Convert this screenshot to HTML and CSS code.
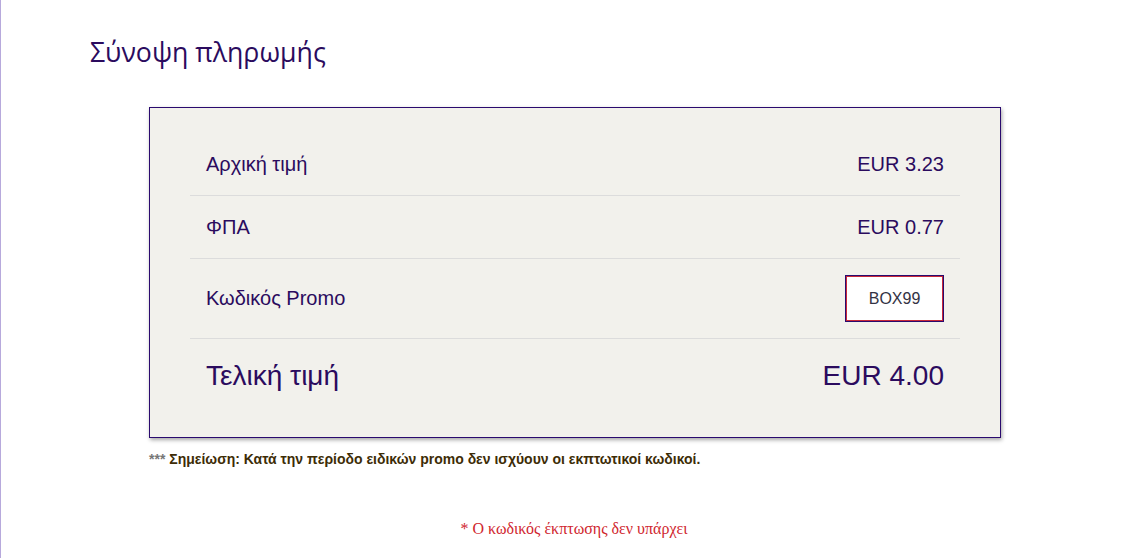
FILE: index.html
```html
<!DOCTYPE html>
<html lang="el">
<head>
    <meta charset="UTF-8">
    <meta name="viewport" content="width=device-width, initial-scale=1.0">
    <title>Σύνοψη πληρωμής</title>
    <link rel="stylesheet" href="styles.css">
</head>
<body>
    <div class="page">
        <!-- Title -->
        <h1 class="page-title">Σύνοψη πληρωμής</h1>

        <!-- Summary box -->
        <div class="summary">
            <div class="summary-row">
                <span class="label">Αρχική τιμή</span>
                <span class="value">EUR 3.23</span>
            </div>
            <div class="summary-row">
                <span class="label">ΦΠΑ</span>
                <span class="value">EUR 0.77</span>
            </div>
            <div class="summary-row promo-row">
                <span class="label">Κωδικός Promo</span>
                <input type="text" class="promo-input" value="BOX99">
            </div>
            <div class="summary-row total-row">
                <span class="label">Τελική τιμή</span>
                <span class="value">EUR 4.00</span>
            </div>
        </div>

        <p class="note"><span class="stars">***</span> Σημείωση: Κατά την περίοδο ειδικών promo δεν ισχύουν οι εκπτωτικοί κωδικοί.</p>

        <p class="error">* Ο κωδικός έκπτωσης δεν υπάρχει</p>
    </div>
</body>
</html>
```

FILE: styles.css
```css
/* Global Styles */
body, html {
    margin: 0;
    padding: 0;
    background-color: #ffffff;
}

.page {
    min-height: 558px;
    border-left: 1px solid #b7a9dc;
    box-sizing: border-box;
    padding-top: 34px;
}

/* Title */
.page-title {
    margin: 0 0 37px 89px;
    font-family: "Open Sans", "Noto Sans", sans-serif;
    font-weight: normal;
    font-size: 26.7px;
    line-height: 36px;
    color: #2b0b5e;
}

/* Summary box */
.summary {
    width: 852px;
    margin-left: 148px;
    box-sizing: border-box;
    padding: 25px 40px 24px;
    background-color: #f2f1ec;
    border: 1px solid #2a0a6e;
    box-shadow: 1px 2px 4px rgba(0, 0, 0, 0.35);
    font-family: "Liberation Sans", Arial, sans-serif;
    color: #2b0b5e;
}

.summary-row {
    display: flex;
    justify-content: space-between;
    align-items: center;
    height: 62px;
    padding: 0 16px;
    border-bottom: 1px solid #dcdcdc;
}

.label,
.value {
    font-size: 20px;
}

.promo-row {
    height: 79px;
}

.promo-input {
    width: 99px;
    height: 47px;
    box-sizing: border-box;
    border: 1px solid #2a0a6e;
    box-shadow: inset 0 0 0 1px #c8283a;
    background: #ffffff;
    text-align: center;
    font-family: "Liberation Sans", Arial, sans-serif;
    font-size: 16px;
    color: #333344;
    outline: none;
}

.total-row {
    height: 74px;
    border-bottom: none;
}

.total-row .label,
.total-row .value {
    font-size: 28px;
}

/* Note */
.note {
    margin: 13px 0 0 148px;
    font-family: "Liberation Sans", Arial, sans-serif;
    font-weight: bold;
    font-size: 14px;
    color: #3d2c06;
}

.stars {
    color: #777777;
}

/* Error message */
.error {
    margin: 53px 0 0;
    padding-left: 4px;
    text-align: center;
    font-family: "Liberation Serif", "Times New Roman", serif;
    font-size: 16px;
    color: #d0262e;
}
```
